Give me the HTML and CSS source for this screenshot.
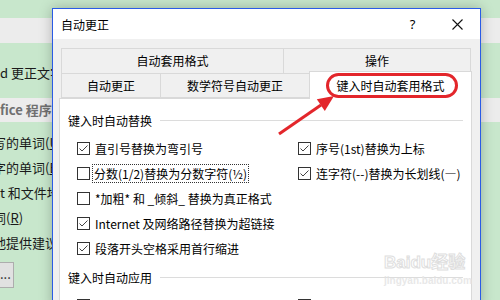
FILE: index.html
```html
<!DOCTYPE html>
<html lang="zh-CN">
<head>
  <meta charset="UTF-8">
  <title>自动更正</title>
  <link rel="stylesheet" href="styles.css">
</head>
<body>
<div class="desk">

  <!-- Word options window behind the dialog -->
  <div class="bg-window">
    <div class="bg-top"></div>
    <div class="bg-band"></div>
    <div class="bg-block">
      <p class="bg-line">d 更正文字</p>
    </div>
    <div class="bg-band bg-title">fice 程序中</div>
    <div class="bg-list">
      <p class="bg-line cut">写的单词(<u>U</u>)</p>
      <p class="bg-line cut">字的单词(<u>B</u>)</p>
      <p class="bg-line">t 和文件地址</p>
      <p class="bg-line cut">词(<u>R</u>)</p>
      <p class="bg-line cut">地提供建议</p>
      <div class="bg-btn">...</div>
    </div>
  </div>

  <!-- AutoCorrect dialog -->
  <div class="dialog">
    <div class="titlebar">
      <span class="title">自动更正</span>
      <span class="tb-btn help">?</span>
      <span class="tb-btn close">
        <svg width="11" height="11" viewBox="0 0 11 11"><path d="M0.5 0.5 L10.5 10.5 M10.5 0.5 L0.5 10.5" stroke="#111" stroke-width="1.1" fill="none"/></svg>
      </span>
    </div>

    <div class="dlg-body">
      <div class="tab-row row-back">
        <div class="tab w222">自动套用格式</div>
        <div class="tab w188">操作</div>
      </div>
      <div class="tab-row row-front">
        <div class="tab w100">自动更正</div>
        <div class="tab w150">数学符号自动更正</div>
        <div class="tab tab-active">键入时自动套用格式</div>
      </div>

      <div class="panel">
        <div class="group-label"><span>键入时自动替换</span><i class="rule"></i></div>
        <div class="opts">
          <div class="col col-left">
            <label class="opt"><span class="box checked"></span><span>直引号替换为弯引号</span></label>
            <label class="opt"><span class="box"></span><span class="focus">分数(1/2)替换为分数字符(½)</span></label>
            <label class="opt"><span class="box"></span><span>*加粗* 和 _倾斜_ 替换为真正格式</span></label>
            <label class="opt"><span class="box checked"></span><span>Internet 及网络路径替换为超链接</span></label>
            <label class="opt"><span class="box checked"></span><span>段落开头空格采用首行缩进</span></label>
          </div>
          <div class="col">
            <label class="opt"><span class="box checked"></span><span>序号(1st)替换为上标</span></label>
            <label class="opt"><span class="box checked"></span><span>连字符(--)替换为长划线(—)</span></label>
          </div>
        </div>

        <div class="group-label second"><span>键入时自动应用</span><i class="rule"></i></div>
        <div class="opts">
          <div class="col col-left">
            <label class="opt"><span class="box checked"></span><span>自动项目符号列表</span></label>
          </div>
          <div class="col">
            <label class="opt"><span class="box checked"></span><span>自动编号列表</span></label>
          </div>
        </div>
      </div>
    </div>
  </div>

  <!-- watermark -->
  <div class="watermark">
    <span class="wm-big">Baidu经验</span>
    <span class="wm-small">jingyan.baidu.com</span>
  </div>

  <!-- red ring and arrow -->
  <div class="ring"></div>
  <svg class="arrow" width="80" height="60" viewBox="270 90 80 60">
    <line x1="279" y1="134" x2="321" y2="105" stroke="#e3262b" stroke-width="3"/>
    <polygon points="334,96 324.8,110.9 316.8,99.3" fill="#e3262b"/>
  </svg>
</div>
</body>
</html>
```

FILE: styles.css
```css
* {
  margin: 0;
  padding: 0;
  box-sizing: border-box;
}

body {
  width: 500px;
  height: 300px;
  overflow: hidden;
  font-family: "Noto Sans CJK SC", "Noto Sans", sans-serif;
  font-size: 12px;
  color: #000;
  background: #c8e7cc;
}

.desk {
  position: relative;
  width: 500px;
  height: 300px;
  overflow: hidden;
}

/* background window */

.bg-window {
  display: flex;
  flex-direction: column;
  width: 500px;
  font-size: 13px;
  color: #1a1a1a;
}

.bg-top {
  height: 18px;
}

.bg-band {
  height: 25px;
  background: #ececec;
}

.bg-block {
  height: 55px;
  padding-top: 17px;
}

.bg-line {
  height: 25px;
  line-height: 25px;
  white-space: nowrap;
}

.bg-line.cut {
  margin-left: -7px;
}

.bg-title {
  height: 24px;
  line-height: 24px;
  font-weight: bold;
  color: #707070;
}

.bg-list {
  padding-top: 8px;
}

.bg-btn {
  width: 14px;
  height: 26px;
  margin-top: 7px;
  background: #e1e1e1;
  border: 1px solid #adadad;
  border-left: none;
  line-height: 22px;
  overflow: hidden;
  color: #222;
}

/* dialog */

.dialog {
  position: absolute;
  left: 52px;
  top: 8px;
  width: 429px;
  height: 300px;
  border: 1px solid #2a5be6;
  background: #f0f0f0;
  box-shadow: 0 0 12px rgba(0, 0, 0, 0.25);
}

.titlebar {
  display: flex;
  align-items: center;
  height: 30px;
  background: #fff;
  padding-left: 8px;
}

.title {
  flex: 1;
}

.tb-btn {
  width: 45px;
  height: 30px;
  display: flex;
  align-items: center;
  justify-content: center;
}

.help {
  font-size: 13px;
  font-family: "Noto Sans", sans-serif;
}

.dlg-body {
  padding: 9px 8px 0 6px;
}

.tab-row {
  display: flex;
  height: 25px;
  padding-left: 2px;
}

.tab {
  height: 25px;
  line-height: 24px;
  text-align: center;
  border: 1px solid #d9d9d9;
  background: #f0f0f0;
  white-space: nowrap;
}

.tab + .tab {
  margin-left: -1px;
}

.row-back .tab {
  border-bottom: none;
}

.w222 { width: 223px; }
.w188 { width: 188px; }
.w100 { width: 100px; }
.w150 { width: 150px; }

.tab-active {
  position: relative;
  z-index: 2;
  width: 163px;
  height: 28px;
  margin-top: -2px;
  margin-left: -2px;
  line-height: 28px;
  background: #fff;
  border-bottom: none;
}

.panel {
  position: relative;
  z-index: 1;
  background: #fff;
  border: 1px solid #d9d9d9;
  padding: 11px 8px 0 8px;
  height: 220px;
}

.group-label {
  display: flex;
  align-items: center;
  height: 20px;
  white-space: nowrap;
}

.group-label.second {
  margin-top: 6px;
}

.rule {
  flex: 1;
  height: 1px;
  margin-left: 8px;
  background: #dcdcdc;
}

.opts {
  display: flex;
  padding-left: 9px;
  margin-top: 6px;
}

.col {
  display: flex;
  flex-direction: column;
}

.col-left {
  width: 221px;
}

.opt {
  display: flex;
  align-items: center;
  height: 25px;
  white-space: nowrap;
}

.box {
  width: 13px;
  height: 13px;
  margin-right: 5px;
  border: 1px solid #333;
  background: #fff;
  flex-shrink: 0;
}

.box.checked {
  background: #fff url("data:image/svg+xml,%3Csvg xmlns='http://www.w3.org/2000/svg' width='11' height='11' viewBox='0 0 11 11'%3E%3Cpath d='M1.5 5.5 L4 8 L9.5 2.5' stroke='%23444' stroke-width='1' fill='none'/%3E%3C/svg%3E") no-repeat center;
}

.focus {
  border: 1px dotted #333;
  padding: 0 1px;
  margin-left: -3px;
  line-height: 17px;
}

/* overlays */

.watermark {
  position: absolute;
  z-index: 5;
  left: 384px;
  top: 252px;
  width: 90px;
  display: flex;
  flex-direction: column;
  pointer-events: none;
  font-family: "Liberation Sans", "Noto Sans CJK SC", sans-serif;
}

.wm-big {
  font-size: 17px;
  font-weight: bold;
  color: transparent;
  -webkit-text-stroke: 1px #dedede;
  line-height: 22px;
  white-space: nowrap;
}

.wm-small {
  font-size: 10px;
  font-weight: bold;
  color: #e8e8e8;
  line-height: 14px;
  white-space: nowrap;
}

.ring {
  position: absolute;
  z-index: 10;
  left: 326px;
  top: 73px;
  width: 132px;
  height: 25px;
  border: 3px solid #e3262b;
  border-radius: 13px;
}

.arrow {
  position: absolute;
  z-index: 10;
  left: 270px;
  top: 90px;
  display: block;
}
```
